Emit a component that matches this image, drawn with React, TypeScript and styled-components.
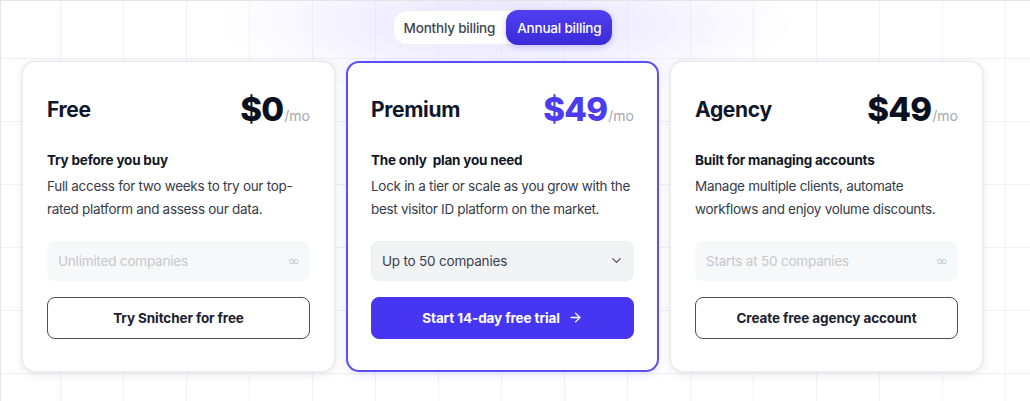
import React from "react";
import styled, { createGlobalStyle } from "styled-components";
import { ChevronDown, ArrowRight } from "lucide-react";

const GlobalStyle = createGlobalStyle`
  html, body {
    margin: 0;
    padding: 0;
  }
  body {
    font-family: "Inter", "Noto Sans", sans-serif;
    color: #111827;
    background-color: #ffffff;
    -webkit-font-smoothing: antialiased;
  }
  * { box-sizing: border-box; }
`;

const Page = styled.div`
  width: 1030px;
  height: 401px;
  overflow: hidden;
  border-top: 1px solid #e4e4e7;
  border-left: 1px solid #e4e4e7;
  background-color: #ffffff;
  background-image:
    radial-gradient(ellipse 290px 75px at 505px 22px, rgba(224, 219, 255, 0.8), rgba(224, 219, 255, 0) 100%),
    linear-gradient(to right, #f1f0fb 1px, transparent 1px),
    linear-gradient(to bottom, #f1f0fb 1px, transparent 1px);
  background-size: 100% 100%, 63px 63px, 63px 63px;
  background-position: 0 0, 59px 57px, 59px 57px;
`;

const Wrapper = styled.div`
  width: 961px;
  margin-left: 21px;
  padding-top: 9px;
  display: flex;
  flex-direction: column;
  align-items: center;
`;

const Toggle = styled.div`
  display: inline-flex;
  height: 35px;
  border-radius: 14px;
  background: #ffffff;
  box-shadow: inset 0 0 0 1px #efeff3;
`;

const ToggleButton = styled.button<{ $active?: boolean }>`
  all: unset;
  display: flex;
  align-items: center;
  padding: 0 11px;
  height: 35px;
  border-radius: 12px;
  font-family: "Inter", sans-serif;
  font-size: 13.5px;
  font-weight: 500;
  letter-spacing: -0.2px;
  color: ${(p) => (p.$active ? "#ffffff" : "#3f4451")};
  background: ${(p) => (p.$active ? "linear-gradient(180deg, #4f3ff0 0%, #3a2ad8 100%)" : "transparent")};
  box-shadow: ${(p) => (p.$active ? "0 2px 6px rgba(67, 56, 230, 0.25)" : "none")};
`;

const CardRow = styled.div`
  display: flex;
  gap: 11px;
  margin-top: 16px;
  width: 100%;
`;

const Card = styled.div<{ $featured?: boolean }>`
  width: 313px;
  height: 311px;
  border-radius: 13px;
  background: #ffffff;
  border: ${(p) => (p.$featured ? "2px solid #5a4ff3" : "1px solid #ebebef")};
  padding: ${(p) => (p.$featured ? "23px 23px 31px" : "24px 24px 32px")};
  box-shadow: ${(p) =>
    p.$featured
      ? "0 3px 10px rgba(90, 79, 243, 0.14)"
      : "0 2px 10px rgba(17, 24, 39, 0.10), 0 0 2px rgba(17, 24, 39, 0.06)"};
  display: flex;
  flex-direction: column;
`;

const Header = styled.div`
  display: flex;
  align-items: center;
  justify-content: space-between;
  height: 48px;
`;

const PlanName = styled.h2`
  margin: 0;
  font-size: 21px;
  font-weight: 700;
  letter-spacing: -0.3px;
  color: #0f172a;
`;

const Price = styled.div`
  display: flex;
  align-items: baseline;
`;

const Amount = styled.span<{ $accent?: boolean }>`
  font-size: 33px;
  font-weight: 800;
  letter-spacing: -0.8px;
  color: ${(p) => (p.$accent ? "#4b3cf0" : "#0b1020")};
`;

const Per = styled.span`
  font-size: 14px;
  font-weight: 400;
  color: #a3a7b0;
  margin-left: 1px;
`;

const Tagline = styled.div`
  margin-top: 17px;
  font-size: 13.5px;
  line-height: 20px;
  font-weight: 700;
  letter-spacing: -0.2px;
  color: #111827;
  white-space: pre;
`;

const Description = styled.p`
  margin: 5px 0 0;
  font-size: 13.5px;
  line-height: 23px;
  letter-spacing: -0.3px;
  color: #363c4a;
  height: 46px;
`;

const Field = styled.div<{ $select?: boolean }>`
  margin-top: 20px;
  height: 41px;
  border-radius: 8px;
  background: ${(p) => (p.$select ? "#f2f3f5" : "#f7f8f9")};
  border: ${(p) => (p.$select ? "1px solid #eceef1" : "none")};
  display: flex;
  align-items: center;
  justify-content: space-between;
  padding: ${(p) => (p.$select ? "0 9px 0 10px" : "0 10px 0 11px")};
  font-size: 13.5px;
  letter-spacing: -0.2px;
  color: ${(p) => (p.$select ? "#374151" : "#c5c8ce")};
`;

const Infinity = styled.span`
  font-size: 15px;
  color: #c5c8ce;
  font-family: "DejaVu Sans", sans-serif;
`;

const Button = styled.button<{ $primary?: boolean }>`
  all: unset;
  margin-top: 16px;
  height: 41px;
  border-radius: 8px;
  display: flex;
  align-items: center;
  justify-content: center;
  gap: 8px;
  font-family: "Inter", sans-serif;
  font-size: 13.5px;
  font-weight: 700;
  letter-spacing: -0.1px;
  color: ${(p) => (p.$primary ? "#ffffff" : "#1b2130")};
  background: ${(p) => (p.$primary ? "#4636f2" : "#ffffff")};
  border: ${(p) => (p.$primary ? "1px solid #4636f2" : "1.5px solid #4a505c")};
`;

type Plan = {
  name: string;
  price: string;
  accent?: boolean;
  tagline: string;
  desc: string;
  field: string;
  select?: boolean;
  cta: string;
  primary?: boolean;
};

const plans: Plan[] = [
  {
    name: "Free",
    price: "$0",
    tagline: "Try before you buy",
    desc: "Full access for two weeks to try our top-rated platform and assess our data.",
    field: "Unlimited companies",
    cta: "Try Snitcher for free",
  },
  {
    name: "Premium",
    price: "$49",
    accent: true,
    tagline: "The only  plan you need",
    desc: "Lock in a tier or scale as you grow with the best visitor ID platform on the market.",
    field: "Up to 50 companies",
    select: true,
    cta: "Start 14-day free trial",
    primary: true,
  },
  {
    name: "Agency",
    price: "$49",
    tagline: "Built for managing accounts",
    desc: "Manage multiple clients, automate workflows and enjoy volume discounts.",
    field: "Starts at 50 companies",
    cta: "Create free agency account",
  },
];

export default function App() {
  return (
    <>
      <GlobalStyle />
      <Page>
        <Wrapper>
          <Toggle>
            <ToggleButton>Monthly billing</ToggleButton>
            <ToggleButton $active>Annual billing</ToggleButton>
          </Toggle>
          <CardRow>
            {plans.map((p) => (
              <Card key={p.name} $featured={p.primary}>
                <Header>
                  <PlanName>{p.name}</PlanName>
                  <Price>
                    <Amount $accent={p.accent}>{p.price}</Amount>
                    <Per>/mo</Per>
                  </Price>
                </Header>
                <Tagline>{p.tagline}</Tagline>
                <Description>{p.desc}</Description>
                <Field $select={p.select}>
                  <span>{p.field}</span>
                  {p.select ? (
                    <ChevronDown size={15} strokeWidth={2} color="#4b5563" />
                  ) : (
                    <Infinity>∞</Infinity>
                  )}
                </Field>
                <Button $primary={p.primary}>
                  {p.cta}
                  {p.primary && <ArrowRight size={15} strokeWidth={2.2} />}
                </Button>
              </Card>
            ))}
          </CardRow>
        </Wrapper>
      </Page>
    </>
  );
}
